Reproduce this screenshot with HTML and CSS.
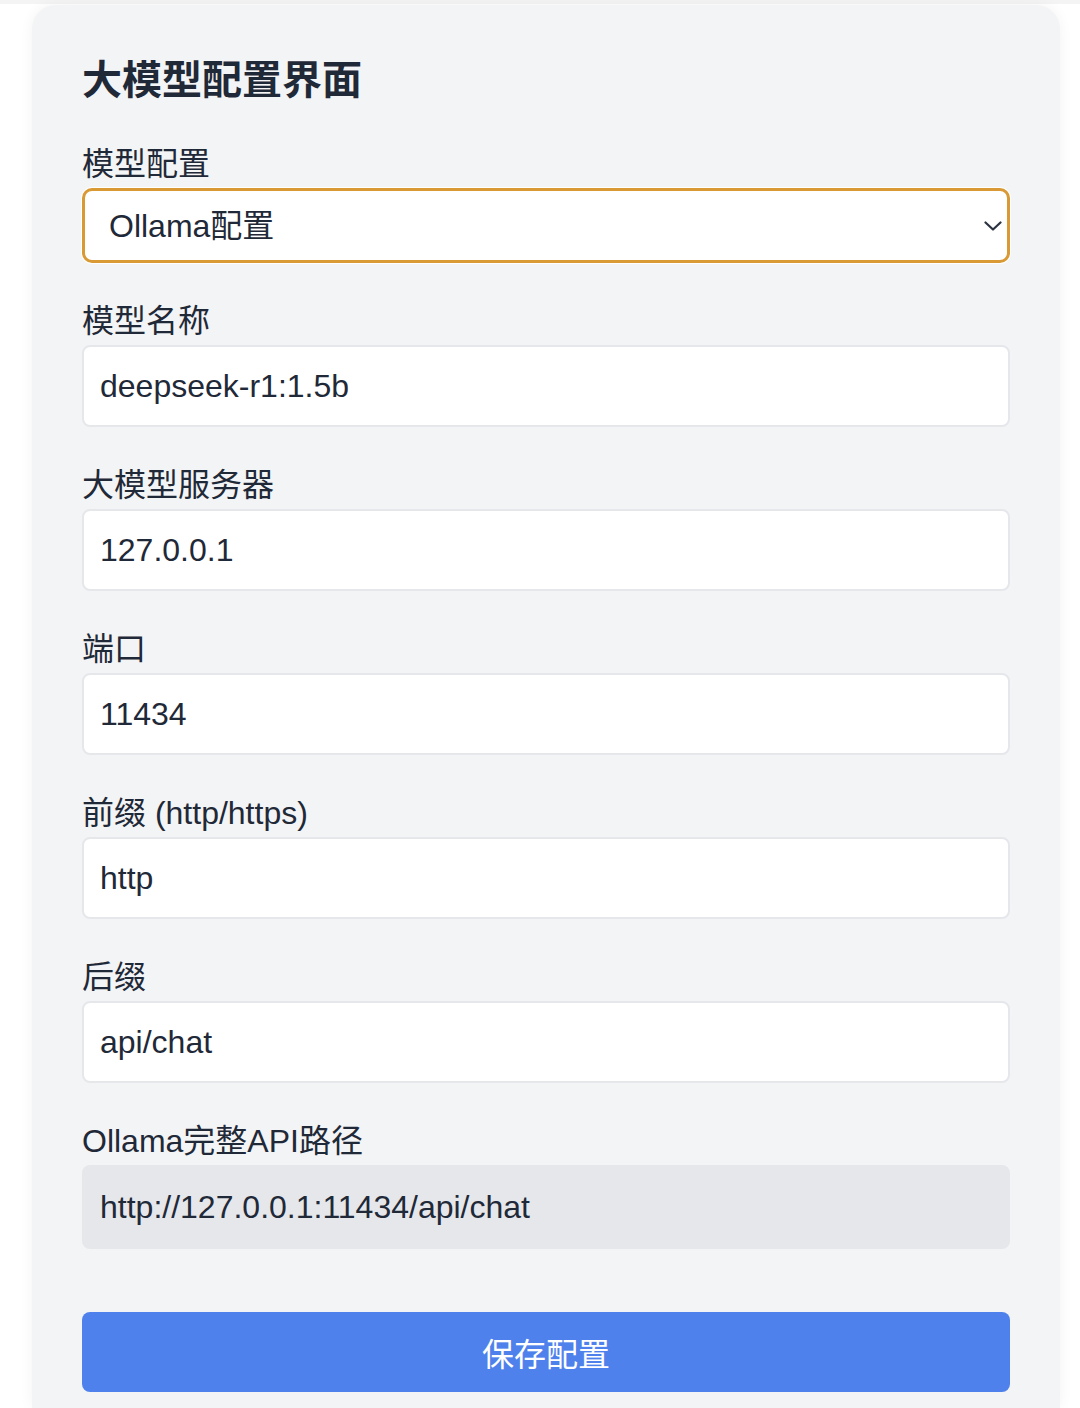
FILE: index.html
```html
<!DOCTYPE html>
<html lang="zh-CN">
<head>
<meta charset="utf-8">
<title>大模型配置界面</title>
<link rel="stylesheet" href="styles.css">
</head>
<body>
<div class="topbar"></div>
<div class="card">
  <h1 class="title">大模型配置界面</h1>

  <div class="field first">
    <label class="label" for="model">模型配置</label>
    <div class="select-wrap">
      <select id="model" class="select">
        <option>Ollama配置</option>
      </select>
      <svg class="chevron" width="18" height="10" viewBox="0 0 18 10"><polyline points="1.5,1.5 9,8.5 16.5,1.5" fill="none" stroke="#2b3340" stroke-width="2.2" stroke-linecap="round" stroke-linejoin="round"/></svg>
    </div>
  </div>

  <div class="field">
    <label class="label">模型名称</label>
    <input class="input" type="text" value="deepseek-r1:1.5b">
  </div>

  <div class="field">
    <label class="label">大模型服务器</label>
    <input class="input" type="text" value="127.0.0.1">
  </div>

  <div class="field">
    <label class="label">端口</label>
    <input class="input" type="text" value="11434">
  </div>

  <div class="field">
    <label class="label">前缀 (http/https)</label>
    <input class="input" type="text" value="http">
  </div>

  <div class="field">
    <label class="label">后缀</label>
    <input class="input" type="text" value="api/chat">
  </div>

  <div class="field">
    <label class="label">Ollama完整API路径</label>
    <div class="readonly">http://127.0.0.1:11434/api/chat</div>
  </div>

  <button class="save" type="button">保存配置</button>
</div>
</body>
</html>
```

FILE: styles.css
```css
* { box-sizing: border-box; }

html, body {
  margin: 0;
  padding: 0;
  background: #ffffff;
  height: 1408px;
  overflow: hidden;
}

body {
  font-family: "Liberation Sans", "Noto Sans CJK SC", sans-serif;
  color: #1f2937;
}

.topbar {
  height: 4px;
  background: #f4f4f5;
}

.card {
  margin: 1px 0 0 32px;
  width: 1028px;
  height: 1403px;
  background: #f3f4f6;
  border-radius: 24px 24px 0 0;
  box-shadow: 0 0 14px rgba(0, 0, 0, 0.05);
  padding: 47px 50px 0;
}

.title {
  margin: 0 0 38px;
  font-size: 40px;
  line-height: 56px;
  font-weight: 700;
  color: #1f2937;
}

.field {
  display: flex;
  flex-direction: column;
  margin-top: 40px;
}

.field.first { margin-top: 0; }

.label {
  font-size: 32px;
  line-height: 36px;
  margin-bottom: 6px;
  color: #1f2937;
}

.select-wrap {
  position: relative;
}

.select {
  appearance: none;
  -webkit-appearance: none;
  width: 100%;
  height: 75px;
  margin: 0;
  border: 3px solid #d99a35;
  border-radius: 10px;
  box-shadow: 0 0 0 1px #ffffff;
  background: #ffffff;
  padding: 0 60px 0 24px;
  font-family: inherit;
  font-size: 32px;
  color: #1f2937;
  outline: none;
}

.chevron {
  position: absolute;
  right: 8px;
  top: 33px;
  pointer-events: none;
}

.input {
  width: 100%;
  height: 82px;
  margin: 0;
  border: 2px solid #e5e7eb;
  border-radius: 8px;
  background: #ffffff;
  padding: 0 16px;
  font-family: inherit;
  font-size: 32px;
  color: #1f2937;
  outline: none;
}

.readonly {
  height: 84px;
  border-radius: 8px;
  background: #e5e7eb;
  padding: 0 18px;
  display: flex;
  align-items: center;
  font-size: 32px;
  color: #1f2937;
}

.save {
  display: block;
  width: 100%;
  height: 80px;
  margin-top: 63px;
  border: none;
  border-radius: 8px;
  background: #4f81ec;
  color: #ffffff;
  font-family: inherit;
  font-size: 32px;
  cursor: pointer;
}
```
